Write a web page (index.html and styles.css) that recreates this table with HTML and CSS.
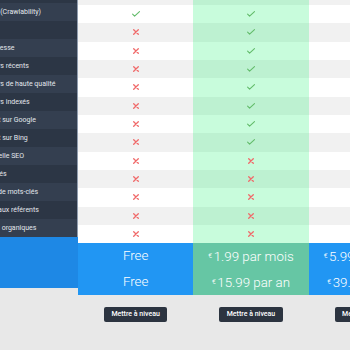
FILE: index.html
```html
<!DOCTYPE html>
<html lang="fr">
<head>
<meta charset="utf-8">
<title>Plans</title>
<link rel="stylesheet" href="styles.css">
</head>
<body>
<svg class="defs" width="0" height="0" aria-hidden="true">
  <symbol id="i-check" viewBox="0 0 8 6"><path d="M0.6 3.1 L2.6 5.1 L7.5 0.6" fill="none" stroke="#62bb6a" stroke-width="1.1" stroke-linecap="round" stroke-linejoin="round"/></symbol>
  <symbol id="i-cross" viewBox="0 0 6 6"><path d="M0.7 0.7 L5.3 5.3 M5.3 0.7 L0.7 5.3" fill="none" stroke="#f06a6a" stroke-width="1.3" stroke-linecap="round"/></symbol>
</svg>
<div class="pricing">
  <div class="features">
    <div class="feature">Fonctionnalités</div>
    <div class="feature">Exploration (Crawlability)</div>
    <div class="feature">Robots.txt</div>
    <div class="feature">Score de vitesse</div>
    <div class="feature">Liens retours récents</div>
    <div class="feature">Liens retours de haute qualité</div>
    <div class="feature">Liens retours indexés</div>
    <div class="feature">Classement sur Google</div>
    <div class="feature">Classement sur Bing</div>
    <div class="feature">Valeur actuelle SEO</div>
    <div class="feature">Liens bloqués</div>
    <div class="feature">Recherche de mots-clés</div>
    <div class="feature">Profils sociaux référents</div>
    <div class="feature">Recherches organiques</div>
    <div class="feature-price"></div>
    <div class="feature-price"></div>
  </div>

  <div class="plan plan-free">
    <div class="cell"></div>
    <div class="cell"><svg class="icon-check"><use href="#i-check"/></svg></div>
    <div class="cell"><svg class="icon-cross"><use href="#i-cross"/></svg></div>
    <div class="cell"><svg class="icon-cross"><use href="#i-cross"/></svg></div>
    <div class="cell"><svg class="icon-cross"><use href="#i-cross"/></svg></div>
    <div class="cell"><svg class="icon-cross"><use href="#i-cross"/></svg></div>
    <div class="cell"><svg class="icon-cross"><use href="#i-cross"/></svg></div>
    <div class="cell"><svg class="icon-cross"><use href="#i-cross"/></svg></div>
    <div class="cell"><svg class="icon-cross"><use href="#i-cross"/></svg></div>
    <div class="cell"><svg class="icon-cross"><use href="#i-cross"/></svg></div>
    <div class="cell"><svg class="icon-cross"><use href="#i-cross"/></svg></div>
    <div class="cell"><svg class="icon-cross"><use href="#i-cross"/></svg></div>
    <div class="cell"><svg class="icon-cross"><use href="#i-cross"/></svg></div>
    <div class="cell"><svg class="icon-cross"><use href="#i-cross"/></svg></div>
    <div class="price">Free</div>
    <div class="price">Free</div>
    <div class="plan-footer"><button class="btn" type="button">Mettre à niveau</button></div>
  </div>

  <div class="plan plan-basic">
    <div class="cell"></div>
    <div class="cell"><svg class="icon-check"><use href="#i-check"/></svg></div>
    <div class="cell"><svg class="icon-check"><use href="#i-check"/></svg></div>
    <div class="cell"><svg class="icon-check"><use href="#i-check"/></svg></div>
    <div class="cell"><svg class="icon-check"><use href="#i-check"/></svg></div>
    <div class="cell"><svg class="icon-check"><use href="#i-check"/></svg></div>
    <div class="cell"><svg class="icon-check"><use href="#i-check"/></svg></div>
    <div class="cell"><svg class="icon-check"><use href="#i-check"/></svg></div>
    <div class="cell"><svg class="icon-check"><use href="#i-check"/></svg></div>
    <div class="cell"><svg class="icon-cross"><use href="#i-cross"/></svg></div>
    <div class="cell"><svg class="icon-cross"><use href="#i-cross"/></svg></div>
    <div class="cell"><svg class="icon-cross"><use href="#i-cross"/></svg></div>
    <div class="cell"><svg class="icon-cross"><use href="#i-cross"/></svg></div>
    <div class="cell"><svg class="icon-cross"><use href="#i-cross"/></svg></div>
    <div class="price"><span class="cur">€</span>1.99 par mois</div>
    <div class="price"><span class="cur">€</span>15.99 par an</div>
    <div class="plan-footer"><button class="btn" type="button">Mettre à niveau</button></div>
  </div>

  <div class="plan plan-pro">
    <div class="cell"></div>
    <div class="cell"><svg class="icon-check"><use href="#i-check"/></svg></div>
    <div class="cell"><svg class="icon-check"><use href="#i-check"/></svg></div>
    <div class="cell"><svg class="icon-check"><use href="#i-check"/></svg></div>
    <div class="cell"><svg class="icon-check"><use href="#i-check"/></svg></div>
    <div class="cell"><svg class="icon-check"><use href="#i-check"/></svg></div>
    <div class="cell"><svg class="icon-check"><use href="#i-check"/></svg></div>
    <div class="cell"><svg class="icon-check"><use href="#i-check"/></svg></div>
    <div class="cell"><svg class="icon-check"><use href="#i-check"/></svg></div>
    <div class="cell"><svg class="icon-check"><use href="#i-check"/></svg></div>
    <div class="cell"><svg class="icon-check"><use href="#i-check"/></svg></div>
    <div class="cell"><svg class="icon-check"><use href="#i-check"/></svg></div>
    <div class="cell"><svg class="icon-check"><use href="#i-check"/></svg></div>
    <div class="cell"><svg class="icon-check"><use href="#i-check"/></svg></div>
    <div class="price"><span class="cur">€</span>5.99 par mois</div>
    <div class="price"><span class="cur">€</span>39.99 par an</div>
    <div class="plan-footer"><button class="btn" type="button">Mettre à niveau</button></div>
  </div>
</div>
</body>
</html>
```

FILE: styles.css
```css
html, body {
  margin: 0;
  height: 100%;
  overflow: hidden;
  background: #e8e8e8;
  font-family: Roboto, "Noto Sans", "Liberation Sans", sans-serif;
}

.defs {
  position: absolute;
  width: 0;
  height: 0;
}

.pricing {
  display: flex;
  align-items: flex-start;
  margin: -15.33px 0 0 -45px;
}

.features {
  flex: 0 0 123px;
  width: 123px;
}

.feature {
  box-sizing: border-box;
  height: 18px;
  line-height: 18px;
  padding-left: 8.5px;
  font-size: 7px;
  color: #e3e7ed;
  white-space: nowrap;
  overflow: hidden;
  background: #2c3645;
  border-right: 1px solid #8f9cae;
}

.feature:nth-child(even) {
  background: #343f50;
}

.feature-price {
  height: 25.8px;
  background: #1e88e5;
}

.plan {
  flex: 0 0 115.33px;
  width: 115.33px;
  margin-top: 2px;
}

.cell {
  height: 18.33px;
  display: flex;
  align-items: center;
  justify-content: center;
  background: #ffffff;
}

.plan-free .cell:nth-child(odd),
.plan-pro .cell:nth-child(odd) {
  background: #f1f1f1;
}

.plan-basic .cell {
  background: #c8fcdc;
}

.plan-basic .cell:nth-child(odd) {
  background: #bdf1d1;
}

.icon-check {
  width: 8px;
  height: 6px;
}

.icon-cross {
  width: 6px;
  height: 6px;
}

.price {
  height: 26px;
  line-height: 26px;
  text-align: center;
  color: #ffffff;
  font-size: 13.33px;
  font-weight: 300;
  white-space: nowrap;
  background: #2196f3;
}

.plan-basic .price {
  background: #66c6a4;
}

.cur {
  font-size: 7px;
  vertical-align: 2.5px;
  margin-right: 1.5px;
}

.plan-footer {
  display: flex;
  justify-content: center;
  padding-top: 11.4px;
}

.btn {
  display: block;
  height: 15.6px;
  line-height: 15.6px;
  padding: 0 7.5px;
  border: none;
  border-radius: 2px;
  background: #2c3440;
  color: #ffffff;
  font-family: inherit;
  font-size: 7px;
  font-weight: 500;
  white-space: nowrap;
  cursor: pointer;
}
```
